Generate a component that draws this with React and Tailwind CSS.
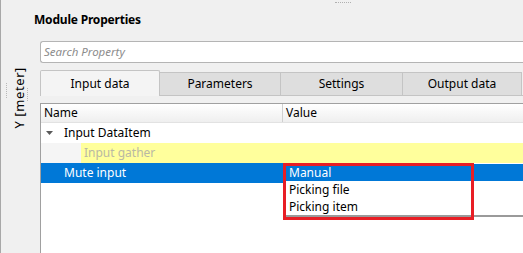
export default function App() {
  const tabs = ['Parameters', 'Settings', 'Output data'];

  return (
    <div className="relative flex h-[253px] w-[523px] flex-col overflow-hidden border-l border-[#a8a8a8] bg-[#f0f0f0] font-['Noto_Sans',sans-serif] text-[12px] leading-none text-black">
      {/* splitter grip */}
      <div className="absolute left-[334px] top-[2px] h-px w-[16px] border-t border-dotted border-[#b0b0b0]" />

      <div className="h-[41px] shrink-0 pl-[33px] pt-[14px] text-[12px] font-bold tracking-[-0.2px]">
        Module Properties
      </div>

      <div className="flex min-h-0 flex-1">
        {/* collapsed axis panel */}
        <div className="relative w-[39px] shrink-0">
          <div className="absolute left-[5px] top-[42px] h-[15px] w-px border-l border-dotted border-[#b8b8b8]" />
          <div className="absolute left-[26px] top-[47px] h-[13px] w-px border-l border-dotted border-[#b8b8b8]" />
          <div className="absolute left-[12px] top-[26px] rotate-180 text-[13px] tracking-[0.6px] [writing-mode:vertical-rl]">
            Y [meter]
          </div>
        </div>

        <div className="flex min-w-0 flex-1 flex-col">
          <div className="flex h-[22px] shrink-0 items-center rounded-l-[3px] border border-r-0 border-[#b4b4b4] bg-white pl-[3px] text-[11.5px] italic text-[#8c8c8c]">
            Search Property
          </div>

          <div className="mt-[7px] flex h-[26px] shrink-0 items-end">
            <div className="flex h-[26px] w-[120px] shrink-0 items-center justify-center rounded-t-[2px] border border-b-0 border-[#c4c4c4] bg-[#f4f4f4]">
              Input data
            </div>
            {tabs.map((t, i) => (
              <div
                key={t}
                className={`flex h-[24px] shrink-0 items-center justify-center border border-l-0 border-[#c4c4c4] bg-[#dedede] ${i === 1 ? 'w-[122px]' : i === 2 ? 'w-[119px]' : 'w-[121px]'}`}
              >
                {t}
              </div>
            ))}
            <div className="h-[24px] flex-1 border-b border-[#c4c4c4]" />
          </div>

          <div className="h-[7px] shrink-0" />

          <div className="flex flex-1 flex-col border-l border-t border-[#a0a0a0] bg-white">
            <div className="flex h-[19px] shrink-0 border-b border-[#e2e2e2] bg-gradient-to-b from-white to-[#efefef]">
              <div className="flex w-[242px] items-center border-r border-[#d0d0d0] pl-[3px]">Name</div>
              <div className="flex flex-1 items-center pl-[3px]">Value</div>
            </div>

            <div className="flex h-[20px] shrink-0 items-center">
              <svg width="8" height="5" viewBox="0 0 8 5" className="ml-[5px] mr-[10px]">
                <path d="M0 0h7L3.5 4z" fill="#5a5a5a" />
              </svg>
              Input DataItem
            </div>
            <div className="flex h-[20px] shrink-0">
              <div className="w-[40px] bg-[#f5f5f5]" />
              <div className="flex flex-1 items-center bg-[#ffff9c] pl-[3px] text-[#b9b9a4]">Input gather</div>
            </div>
            <div className="flex h-[20px] shrink-0 items-center bg-[#0078d7] pl-[23px] text-white">Mute input</div>
          </div>
        </div>
      </div>

      {/* open combo list */}
      <div className="absolute left-[283px] right-0 top-[163px] flex flex-col border-b-2 border-[#9a9a9a] bg-white pt-px">
        <div className="flex h-[17px] items-center bg-[#0078d7] pl-[5px] text-white">Manual</div>
        <div className="flex h-[17px] items-center pl-[5px]">Picking file</div>
        <div className="flex h-[17px] items-center pl-[5px]">Picking item</div>
      </div>
      <div className="absolute left-[282px] top-[163px] h-[57px] w-[191px] border-[3px] border-[#e81e25]" />
    </div>
  );
}
